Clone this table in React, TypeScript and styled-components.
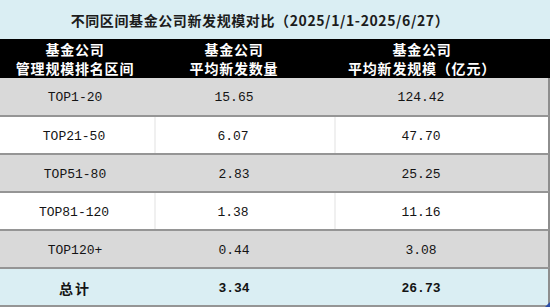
import styled, { createGlobalStyle } from 'styled-components';

const GlobalStyle = createGlobalStyle`
  html, body {
    margin: 0;
    padding: 0;
    background: #ffffff;
  }
  body {
    width: 550px;
    height: 307px;
    overflow: hidden;
  }
`;

const cjk = `"Noto Sans CJK SC", "Noto Sans", sans-serif`;
const mono = `"Liberation Mono", "DejaVu Sans Mono", monospace`;

// text centres do not sit in the middle of the cells, so each column gets its own right padding
const colPad = ['6px', '24px', '42px'];

const Sheet = styled.div`
  position: relative;
  width: 550px;
  height: 307px;
  display: flex;
  flex-direction: column;
  background: #ffffff;
`;

const TitleBar = styled.div`
  height: 39px;
  display: flex;
  align-items: center;
  justify-content: center;
  padding-right: 30px;
  background: #daeef3;
  font-family: ${cjk};
  font-size: 14px;
  font-weight: 700;
  letter-spacing: 0.6px;
  color: #1c1c1c;
`;

const Grid = styled.div`
  display: grid;
  grid-template-columns: 156px 180px 212px;
  width: 548px;
  border-right: 2px solid #8e8e8e;
`;

const HeaderRow = styled(Grid)`
  height: 39px;
  background: #000000;
  width: 550px;
  border-right: none;
  grid-template-columns: 156px 180px 214px;
`;

const HeaderCell = styled.div<{ $col: number }>`
  display: flex;
  flex-direction: column;
  align-items: center;
  justify-content: center;
  padding-right: ${(p) => colPad[p.$col]};
  font-family: ${cjk};
  font-size: 14px;
  font-weight: 700;
  line-height: 19px;
  letter-spacing: 0.8px;
  color: #ffffff;
`;

const BodyRow = styled(Grid)<{ $tone: 'gray' | 'white' | 'total'; $first?: boolean }>`
  height: ${(p) => (p.$first ? '37px' : '36px')};
  border-top: ${(p) => (p.$first ? 'none' : '2px solid #959595')};
  background: ${(p) =>
    p.$tone === 'gray' ? '#d9d9d9' : p.$tone === 'total' ? '#daeef3' : '#ffffff'};
`;

const TotalRow = styled(BodyRow)`
  border-bottom: 2px solid #959595;
`;

const Cell = styled.div<{ $col: number; $sep: boolean; $bold?: boolean }>`
  display: flex;
  align-items: center;
  justify-content: center;
  padding-right: ${(p) => colPad[p.$col]};
  padding-top: 2px;
  border-right: ${(p) => (p.$sep && p.$col < 2 ? '2px solid #f0f0f0' : 'none')};
  font-family: ${mono};
  font-size: 13px;
  font-weight: ${(p) => (p.$bold ? 700 : 400)};
  color: #141414;
`;

const TotalLabel = styled.span`
  font-family: ${cjk};
  font-weight: 700;
  font-size: 14px;
  letter-spacing: 2px;
`;

const CornerHandle = styled.div`
  position: absolute;
  right: 0;
  bottom: 0;
  width: 0;
  height: 0;
  border-left: 5px solid transparent;
  border-bottom: 5px solid #2e4fa8;
`;

const rows = [
  { name: 'TOP1-20', count: '15.65', scale: '124.42' },
  { name: 'TOP21-50', count: '6.07', scale: '47.70' },
  { name: 'TOP51-80', count: '2.83', scale: '25.25' },
  { name: 'TOP81-120', count: '1.38', scale: '11.16' },
  { name: 'TOP120+', count: '0.44', scale: '3.08' },
];

const headers = [
  ['基金公司', '管理规模排名区间'],
  ['基金公司', '平均新发数量'],
  ['基金公司', '平均新发规模（亿元）'],
];

export default function App() {
  return (
    <>
      <GlobalStyle />
      <Sheet>
        <TitleBar>不同区间基金公司新发规模对比（2025/1/1-2025/6/27）</TitleBar>
        <HeaderRow>
          {headers.map((h, i) => (
            <HeaderCell key={i} $col={i}>
              <span>{h[0]}</span>
              <span>{h[1]}</span>
            </HeaderCell>
          ))}
        </HeaderRow>
        {rows.map((r, i) => {
          const white = i % 2 === 1;
          return (
            <BodyRow key={r.name} $tone={white ? 'white' : 'gray'} $first={i === 0}>
              <Cell $col={0} $sep={white}>{r.name}</Cell>
              <Cell $col={1} $sep={white}>{r.count}</Cell>
              <Cell $col={2} $sep={white}>{r.scale}</Cell>
            </BodyRow>
          );
        })}
        <TotalRow $tone="total">
          <Cell $col={0} $sep={false}>
            <TotalLabel>总计</TotalLabel>
          </Cell>
          <Cell $col={1} $sep={false} $bold>3.34</Cell>
          <Cell $col={2} $sep={false} $bold>26.73</Cell>
        </TotalRow>
        <CornerHandle />
      </Sheet>
    </>
  );
}
